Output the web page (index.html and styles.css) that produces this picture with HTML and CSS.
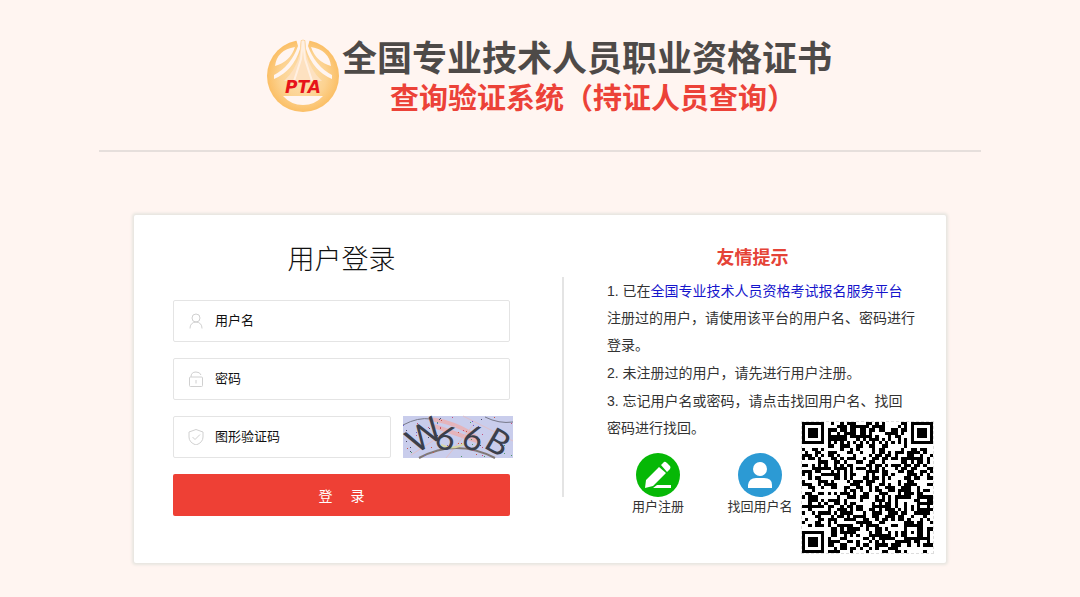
FILE: index.html
```html
<!DOCTYPE html>
<html lang="zh-CN">
<head>
    <meta charset="UTF-8">
    <meta name="viewport" content="width=device-width, initial-scale=1.0">
    <title>用户登录</title>
    <link rel="stylesheet" href="styles.css">
</head>
<body>
    <header class="header">
        <svg class="logo" viewBox="0 0 74 74" aria-hidden="true">
            <defs>
                <radialGradient id="gold">
                    <stop offset="0" stop-color="#fde3b8"/>
                    <stop offset="0.65" stop-color="#fcd290"/>
                    <stop offset="1" stop-color="#fbbf66"/>
                </radialGradient>
            </defs>
            <circle cx="37" cy="37" r="36" fill="url(#gold)"/>
            <path d="M29 8 Q11 11 9 27 Q24 23 29 8 Z M45 8 Q63 11 65 27 Q50 23 45 8 Z" fill="#fff5f1"/>
            <path d="M30 0 H35 L34 10 Q27 32 8 40 L8 36 Q25 27 32 7 Z M44 0 H39 L40 10 Q47 32 66 40 L66 36 Q49 27 42 7 Z" fill="#fff5f1"/>
            <path d="M35 2 L37 0 L39 2 L40 14 Q44 31 56 42 H18 Q30 31 34 14 Z" fill="#fde1c0"/>
            <path d="M37 2 L35 20 L28 42 M37 2 L39 20 L46 42" fill="none" stroke="#fff0e2" stroke-width="2"/>
            <path d="M17 57 H57 Q49 66 37 66 Q25 66 17 57 Z" fill="#fff5f1"/>
            <text x="37" y="54" text-anchor="middle" class="logo-text">PTA</text>
        </svg>
        <div class="titles">
            <h1>全国专业技术人员职业资格证书</h1>
            <p>查询验证系统（持证人员查询）</p>
        </div>
    </header>

    <main class="card">
        <form class="login" id="loginForm">
            <h2>用户登录</h2>
            <div class="field">
                <svg viewBox="0 0 16 16" aria-hidden="true"><circle cx="8" cy="5" r="4"/><path d="M2 15.500 Q2 9.500 8 9 Q14 9.500 14 15.500"/></svg>
                <input type="text" id="username" placeholder="用户名" aria-label="用户名">
            </div>
            <div class="field">
                <svg viewBox="0 0 16 16" aria-hidden="true"><rect x="1.500" y="6" width="13" height="9.500" rx="1"/><path d="M3 6 Q3 1 8 1 Q12 1 13 4 M8 9 V12.500"/></svg>
                <input type="password" id="password" placeholder="密码" aria-label="密码">
            </div>
            <div class="captcha-row">
                <div class="field">
                    <svg viewBox="0 0 16 16" aria-hidden="true"><path d="M8 0.500 L15 3 V8 Q15 13.500 8 16 Q1 13.500 1 8 V3 Z M4.500 8 L7 10.500 L12 5.500"/></svg>
                    <input type="text" id="captcha" placeholder="图形验证码" aria-label="图形验证码">
                </div>
                <svg class="captcha" viewBox="0 0 110 42" role="img" aria-label="图形验证码图片">
                    <rect width="110" height="42" fill="#c9cdec"/>
                    <g fill="none">
                        <path d="M26 3 Q54 6 74 22 M31 10 L74 25" stroke="#e5b4bb" stroke-width="4"/>
                        <path d="M60 0 L110 25 M43 42 L71 8 M8 39 L53 10" stroke="#dfbfc8"/>
                        <path d="M0 9 Q15 1 28 3 M82 1 Q96 8 110 6" stroke="#77798a"/>
                        <path d="M16 42 Q53 22 92 42" stroke="#817875" stroke-width="2"/>
                        <path d="M38 29 Q51 35 62 27" stroke="#d9d6a4" stroke-width="2"/>
                    </g>
                    <g id="captchaDots"></g>
                    <g class="captcha-text" text-anchor="middle">
                        <text x="21" y="31" transform="rotate(-33 21 19)">W</text>
                        <text x="43" y="34" transform="rotate(18 43 22)">6</text>
                        <text x="70" y="34" transform="rotate(14 70 22)">6</text>
                        <text x="95" y="38" transform="rotate(30 95 26)">B</text>
                    </g>
                </svg>
            </div>
            <button type="submit">登&emsp; 录</button>
        </form>

        <section class="tips">
            <h3>友情提示</h3>
            <p>1. 已在<a href="#">全国专业技术人员资格考试报名服务平台</a><br>注册过的用户，请使用该平台的用户名、密码进行<br>登录。</p>
            <p>2. 未注册过的用户，请先进行用户注册。</p>
            <p>3. 忘记用户名或密码，请点击找回用户名、找回<br>密码进行找回。</p>
            <nav class="links">
                <a href="#">
                    <svg viewBox="0 0 44 44" aria-hidden="true"><circle cx="22" cy="22" r="22" fill="#06b806"/><path d="M9 35 L10 27 L23 14 L30 20 L17 33 Z M25 12 L28 9 Q29 8 31 10 L34 13 Q35 14 34 16 L31 19 Z M17 35 L21 32 H35 V35 Z" fill="#fff"/></svg>
                    <span>用户注册</span>
                </a>
                <a href="#">
                    <svg viewBox="0 0 44 44" aria-hidden="true"><circle cx="22" cy="22" r="22" fill="#2c9ad4"/><circle cx="22" cy="16" r="7" fill="#fff"/><path d="M10 35 V32 Q11 25 18 25 H26 Q34 25 34 32 V35 Z" fill="#fff"/></svg>
                    <span>找回用户名</span>
                </a>
            </nav>
            <svg class="qrcode" id="qrcode" viewBox="0 0 41 41" role="img" aria-label="二维码" shape-rendering="crispEdges"></svg>
        </section>
    </main>
    <script src="script.js"></script>
</body>
</html>
```
FILE: styles.css
```css
* {
    box-sizing: border-box;
}

body {
    margin: 0;
    background-color: #fff5f1;
    color: #333;
    font-family: "Liberation Sans", "Noto Sans CJK SC", sans-serif;
    font-size: 14px;
}

h1, h2, h3, p {
    margin: 0;
}

a {
    color: #1515cc;
    text-decoration: none;
}

/* Header */
.header {
    display: flex;
    justify-content: center;
    width: 90%;
    max-width: 882px;
    height: 152px;
    margin: 0 auto;
    padding: 39px 0 0 18px;
    border-bottom: 2px solid #e6dfdc;
}

.logo {
    width: 74px;
    height: 74px;
    margin-right: 2px;
}

.logo-text {
    fill: #e7131a;
    font-family: "DejaVu Sans", sans-serif;
    font-size: 17px;
    font-style: italic;
    font-weight: bold;
}

.titles {
    text-align: center;
    font-weight: bold;
    white-space: nowrap;
}

.titles h1 {
    color: #4e4a48;
    font-size: 35px;
    line-height: 40px;
}

.titles p {
    padding-left: 12px;
    color: #ec4238;
    font-size: 29px;
    line-height: 40px;
}

/* Login card */
.card {
    display: grid;
    grid-template-columns: minmax(0, 428fr) minmax(0, 384fr);
    width: 90%;
    max-width: 812px;
    min-height: 348px;
    margin: 63px auto 34px;
    background-color: #fff;
    border-radius: 2px;
    box-shadow: 0 0 3px 2px #e7e5e0;
}

.login {
    display: flex;
    flex-direction: column;
    gap: 16px;
    padding: 24px 52px 46px 39px;
}

.login h2 {
    margin-bottom: 3px;
    color: #111;
    font-size: 27px;
    font-weight: 300;
    line-height: 42px;
    text-align: center;
}

.field {
    display: flex;
    align-items: center;
    min-width: 0;
    height: 42px;
    padding-left: 14px;
    border: 1px solid #e4e4e4;
    border-radius: 2px;
}

.field svg {
    width: 16px;
    height: 16px;
    fill: none;
    stroke: #d0d0d0;
}

.field input {
    flex: 1;
    min-width: 0;
    height: 40px;
    padding: 0 11px 2px;
    border: 0;
    outline: 0;
    background: none;
    font-family: inherit;
    font-size: 13px;
}

.field input::placeholder {
    color: #111;
}

.captcha-row {
    display: flex;
    gap: 12px;
    margin-right: -3px;
}

.captcha-row .field {
    flex: 1;
}

.captcha {
    flex: none;
    width: 110px;
    height: 42px;
    overflow: visible;
}

.captcha-text {
    fill: #3b3f4b;
    font-family: Lato, sans-serif;
    font-size: 34px;
}

.login button {
    height: 42px;
    border: 0;
    border-radius: 2px;
    background-color: #ee4035;
    color: #fff;
    font-family: inherit;
    font-size: 14px;
    cursor: pointer;
}

.login button:hover {
    background-color: #d9362c;
}

/* Tips */
.tips {
    position: relative;
    padding: 28px 0 0 45px;
}

.tips::before {
    content: "";
    position: absolute;
    top: 62px;
    left: 0;
    width: 2px;
    height: 220px;
    background-color: #e4e4e4;
}

.tips h3 {
    margin: 0 48px 5px 0;
    color: #e54337;
    font-size: 18px;
    line-height: 30px;
    text-align: center;
}

.tips p {
    margin-bottom: 1px;
    line-height: 27px;
}

.links {
    display: flex;
    gap: 34px;
    margin: 11px 0 0 17px;
    font-size: 13px;
    line-height: 20px;
}

.links a {
    display: flex;
    flex-direction: column;
    align-items: center;
    min-width: 68px;
    color: #333;
}

.links svg {
    width: 44px;
    height: 44px;
}

.qrcode {
    position: absolute;
    right: 12px;
    bottom: 9px;
    width: 133px;
    height: 133px;
    border: 1px dashed #ddd;
    background-color: #fff;
}
```
FILE: script.js
```javascript
const SIZE = 41;
let seed = 66;

function random() {
    seed = (seed * 1103515245 + 12345) % 2147483648;
    return seed / 2147483648;
}

// Square rings used by the three corners (radius 3) and the small marker (radius 2)
function ring(x, y, cx, cy, radius) {
    const d = Math.max(Math.abs(x - cx), Math.abs(y - cy));
    if (radius === 3) {
        return d > 4 ? null : d !== 2 && d !== 4;
    }
    return d > 2 ? null : d !== 1;
}

function isDark(x, y) {
    const markers = [[3, 3, 3], [37, 3, 3], [3, 37, 3], [34, 34, 2]];
    const noise = random() < 0.5;
    for (const [cx, cy, radius] of markers) {
        const value = ring(x, y, cx, cy, radius);
        if (value !== null) {
            return value;
        }
    }
    if (x === 6 || y === 6) {
        return (x + y) % 2 === 0;
    }
    return noise;
}

let path = '';
for (let y = 0; y < SIZE; y++) {
    for (let x = 0; x < SIZE; x++) {
        if (isDark(x, y)) {
            path += `M${x} ${y}h1v1h-1z`;
        }
    }
}
document.getElementById('qrcode').innerHTML = `<path d="${path}" fill="#000"/>`;

// Coloured specks over the captcha
const colors = ['#c64f7c', '#6a5fd0', '#4f9a6a', '#4a4a68', '#c9554a'];
let dots = '';
for (let i = 0; i < 60; i++) {
    const x = Math.floor(random() * 109);
    const y = Math.floor(random() * 41);
    dots += `<rect x="${x}" y="${y}" width="1" height="1" fill="${colors[i % 5]}"/>`;
}
document.getElementById('captchaDots').innerHTML = dots;

document.getElementById('loginForm').addEventListener('submit', function (e) {
    e.preventDefault();
});
```
